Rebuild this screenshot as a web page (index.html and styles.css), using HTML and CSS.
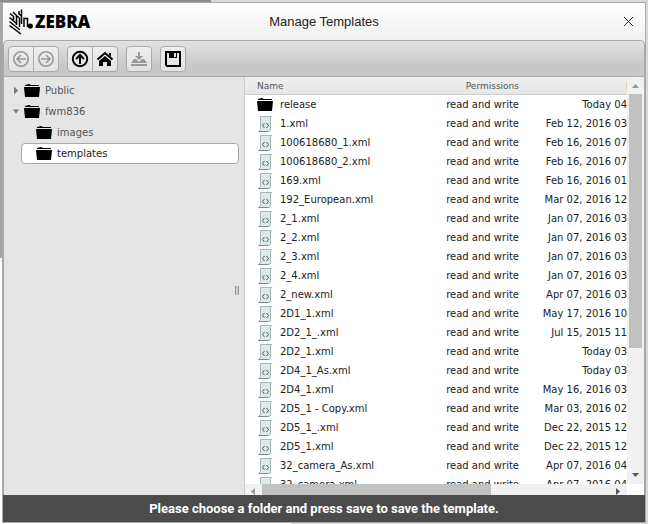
FILE: index.html
```html
<!DOCTYPE html>
<html lang="en">
<head>
<meta charset="utf-8">
<title>Manage Templates</title>
<link rel="stylesheet" href="styles.css">
</head>
<body>
<svg class="sprites" aria-hidden="true">
  <symbol id="folder" viewBox="0 0 16 13"><path d="M1 2 L1 1 L5 0 L7 1 L15 1 V2 Z M0 3 H16 L15 13 H1 Z"/></symbol>
  <symbol id="file" viewBox="0 0 15 16">
    <path d="M2.5 .5 H13.5 L12.5 2 V13.5 Q12.5 15.5 10.5 15.5 H.5 L2.5 13.5 Z" fill="#dfe9ea" stroke="#a9b6b6"/>
    <path d="M.5 15.5 H10.5" stroke="#7d8f8b" fill="none"/>
    <path d="M6.5 7 L4.5 9.5 L6.5 12 M8.5 7 L10.5 9.5 L8.5 12" fill="none" stroke="#4d5757"/>
  </symbol>
</svg>
<main class="dialog">
  <header class="title-bar">
    <div class="brand">
      <svg class="brand-mark" viewBox="0 0 24 26" fill="none" stroke="#000" stroke-width="1.5">
        <path d="M.5 16.5 L12 25 M.5 12.5 L11 21 M.5 8.5 L7 14 M1 4.5 L4.5 7.5 V11 M4 3 L7.5 6.5 V16 M10.5 9 V18 M7.5 6.5 L10.5 9"/>
        <path d="M10 2 V5 L12.5 7 M12.5 .5 V15 M15 8.5 V18 M15 9.5 H18.5 V18"/>
        <circle cx="21.3" cy="17" r="2.6" fill="#000" stroke="none"/>
      </svg>
      <span class="brand-name">ZEBRA</span>
    </div>
    <h1>Manage Templates</h1>
    <button class="close" aria-label="Close"><svg viewBox="0 0 9 9"><path d="M0 0 L9 9 M9 0 L0 9" stroke="#222" fill="none"/></svg></button>
  </header>
  <nav class="toolbar">
    <div class="group">
      <button aria-label="Back" disabled><svg viewBox="0 0 18 18"><circle cx="9" cy="9" r="7.2"/><path d="M14 9 H5 M9 5 L5 9 L9 13"/></svg></button>
      <button aria-label="Forward" disabled><svg viewBox="0 0 18 18"><circle cx="9" cy="9" r="7.2"/><path d="M4 9 H13 M9 5 L13 9 L9 13"/></svg></button>
    </div>
    <div class="group">
      <button aria-label="Up"><svg viewBox="0 0 18 18"><circle cx="9" cy="9" r="7.2"/><path d="M9 14 V5 M5 9 L9 5 L13 9"/></svg></button>
      <button aria-label="Home"><svg viewBox="0 0 18 18"><path d="M1.5 9.5 L9 3 L16.5 9.5"/><path class="solid" d="M3 11 L9 6 L15 11 V16 H11 V12 H7 V16 H3 Z M13 3 H15 V7 L13 5 Z"/></svg></button>
    </div>
    <div class="group">
      <button aria-label="Download" disabled><svg viewBox="0 0 18 18"><path class="solid" d="M8 2 H10 V6 H13 L9 10 L5 6 H8 Z M1 13 L4 9 L6 9 L9 12 L12 9 H14 L17 13 Z M1 14 H17 V16 H1 Z"/></svg></button>
    </div>
    <div class="group">
      <button aria-label="Save"><svg viewBox="0 0 18 18"><path d="M2 2 H16 V16 H3 L2 15 Z"/><path class="solid" d="M5 2 H13 V8 H5 Z"/><path class="slot" d="M10 3 H12 V7 H10 Z"/></svg></button>
    </div>
  </nav>
  <div class="content">
    <aside class="sidebar">
      <ul class="tree">
        <li><a href="#public"><span class="arrow closed"></span><svg class="folder"><use href="#folder"/></svg>Public</a></li>
        <li><a href="#fwm836"><span class="arrow open"></span><svg class="folder"><use href="#folder"/></svg>fwm836</a>
          <ul>
            <li><a href="#images"><svg class="folder"><use href="#folder"/></svg>images</a></li>
            <li><a class="selected" href="#templates"><svg class="folder"><use href="#folder"/></svg>templates</a></li>
          </ul>
        </li>
      </ul>
      <div class="grip"></div>
    </aside>
    <section class="browser">
      <div class="listing">
        <table>
          <thead><tr><th class="name">Name</th><th class="perm">Permissions</th><th class="date">M</th></tr></thead>
          <tbody id="rows"></tbody>
        </table>
      </div>
      <div class="scroll-y"><span class="tip up"></span><span class="thumb"></span><span class="tip down"></span></div>
      <div class="scroll-x"><span class="tip left"></span><span class="thumb"></span><span class="tip right"></span></div>
    </section>
  </div>
  <footer>Please choose a folder and press save to save the template.</footer>
</main>
<script src="files.js"></script>
</body>
</html>
```
FILE: files.js
```js
const files = [
  ["release", "Today 04"],
  ["1.xml", "Feb 12, 2016 03"],
  ["100618680_1.xml", "Feb 16, 2016 07"],
  ["100618680_2.xml", "Feb 16, 2016 07"],
  ["169.xml", "Feb 16, 2016 01"],
  ["192_European.xml", "Mar 02, 2016 12"],
  ["2_1.xml", "Jan 07, 2016 03"],
  ["2_2.xml", "Jan 07, 2016 03"],
  ["2_3.xml", "Jan 07, 2016 03"],
  ["2_4.xml", "Jan 07, 2016 03"],
  ["2_new.xml", "Apr 07, 2016 03"],
  ["2D1_1.xml", "May 17, 2016 10"],
  ["2D2_1_.xml", "Jul 15, 2015 11"],
  ["2D2_1.xml", "Today 03"],
  ["2D4_1_As.xml", "Today 03"],
  ["2D4_1.xml", "May 16, 2016 03"],
  ["2D5_1 - Copy.xml", "Mar 03, 2016 02"],
  ["2D5_1_.xml", "Dec 22, 2015 12"],
  ["2D5_1.xml", "Dec 22, 2015 12"],
  ["32_camera_As.xml", "Apr 07, 2016 04"],
  ["32_camera.xml", "Apr 07, 2016 04"]
];
document.getElementById("rows").innerHTML = files.map(([name, date]) => {
  const icon = name.endsWith(".xml") ? "file" : "folder";
  return `<tr><td class="name"><span class="entry"><span class="icon"><svg class="${icon}"><use href="#${icon}"/></svg></span>${name}</span></td><td class="perm">read and write</td><td class="date">${date}</td></tr>`;
}).join("");
```
FILE: styles.css
```css
* { box-sizing: border-box; }
body {
  margin: 0;
  height: 100vh;
  padding: 2px 2px 1px;
  background:
    linear-gradient(#8e8c92, #8e8c92) 0 0 / 211px 2px no-repeat,
    linear-gradient(#a5a5a5, #a5a5a5) 0 0 / 2px 258px no-repeat,
    linear-gradient(#fff, #fff) 0 258px / 2px 100% no-repeat,
    linear-gradient(#fff, #fff) 0 100% / 291px 1px no-repeat,
    #d9d9d9;
  font: 10px "DejaVu Sans", Verdana, sans-serif;
  color: #222;
}
button { border: 0; padding: 0; background: none; }
ul { list-style: none; margin: 0; padding: 0; }
a { color: inherit; text-decoration: none; }
svg { display: block; }
.sprites { position: absolute; width: 0; height: 0; }
.dialog {
  height: 100%;
  display: flex;
  flex-direction: column;
  border: 1px solid #a9a9a9;
  background: #fff;
}
.title-bar {
  flex: none;
  height: 37px;
  display: grid;
  grid-template-columns: 1fr auto 1fr;
  align-items: center;
  padding: 0 12px 0 6px;
  background: linear-gradient(#fff, #f0f0f0);
}
.brand { display: flex; align-items: center; gap: 2px; }
.brand-mark { width: 24px; height: 26px; }
.brand-name { font: bold 17px "Open Sans", sans-serif; font-weight: 800; color: #000; }
h1 { margin: 0; padding-left: 6px; font: 13px "Liberation Sans", Arial, sans-serif; }
.close { justify-self: end; }
.close svg { width: 9px; height: 9px; }
.toolbar {
  flex: none;
  height: 37px;
  display: flex;
  align-items: center;
  gap: 8px;
  padding: 0 4px;
  border: 1px solid #a9a9a9;
  border-radius: 4px 4px 0 0;
  background: linear-gradient(#e2e2e2, #c8c8c8 70%);
}
.group { display: flex; border: 1px solid #aaa; border-radius: 4px; background: linear-gradient(#eee, #e2e2e2); }
.group button { width: 24px; height: 24px; display: grid; place-items: center; }
.group button + button { width: 25px; border-left: 1px solid #aaa; }
.group svg { width: 18px; height: 18px; fill: none; stroke: #000; stroke-width: 2; }
.group .solid { fill: #000; stroke: none; }
.group .slot { fill: #e6e6e6; stroke: none; }
.group button:disabled svg { stroke: #999; stroke-width: 1.6; }
.group button:disabled .solid { fill: #999; }
.content { flex: 1; min-height: 0; display: flex; border: solid #a9a9a9; border-width: 0 1px; }
.sidebar {
  flex: 0 0 241px;
  position: relative;
  padding: 3px 5px 0 8px;
  border-right: 1px solid #ccc;
  background: #e5e5e5;
  color: #555;
}
.tree a { height: 21px; display: flex; align-items: center; gap: 5px; border: 1px solid transparent; }
.tree .folder { width: 16px; height: 13px; }
.tree ul { padding-left: 9px; }
.tree ul a { padding-left: 14px; }
.tree a.selected { background: #fff; border-color: #aaa; border-radius: 4px; color: #222; }
.arrow { width: 6px; height: 8px; background: #777; }
.closed { clip-path: polygon(17% 0, 83% 50%, 17% 100%); }
.open { clip-path: polygon(0 25%, 100% 25%, 50% 75%); }
.grip { position: absolute; right: 5px; top: 50%; width: 4px; height: 9px; border: solid #999; border-width: 0 1px; background: #ccc; }
.browser {
  flex: 1;
  min-width: 0;
  display: grid;
  grid-template: minmax(0, 1fr) 11px / minmax(0, 1fr) 17px;
}
.listing { overflow: hidden; background: linear-gradient(#f0f0f0, #e6e6e6) 0 0 / 100% 17px no-repeat; }
table { width: 100%; table-layout: fixed; border-collapse: separate; border-spacing: 0; }
th, td { padding: 0; white-space: nowrap; }
th { height: 18px; border-bottom: 1px solid #ccc; font-size: 9px; font-weight: normal; color: #555; }
td { height: 19px; }
.name { padding-left: 12px; text-align: left; }
.perm { width: 80px; text-align: right; }
.date { width: 108px; text-align: right; }
th.date { overflow: hidden; padding-left: 107px; text-align: left; }
.entry { display: flex; align-items: center; gap: 7px; }
.icon { width: 16px; }
.icon .folder { width: 16px; height: 13px; }
.icon .file { width: 15px; height: 16px; margin-left: 1px; }
.scroll-y { display: flex; flex-direction: column; align-items: center; background: #f1f1f1; }
.scroll-y .thumb { width: 13px; flex: 0 0 254px; background: #c1c1c1; }
.scroll-x { display: flex; align-items: center; background: #f1f1f1; }
.scroll-x .thumb { height: 11px; flex: 0 0 60%; background: #c1c1c1; }
.tip { flex: none; background: #555; }
.up { width: 7px; height: 4px; margin: 7px 0 6px; clip-path: polygon(50% 0, 100% 100%, 0 100%); background: #999; }
.down { width: 7px; height: 4px; margin: auto 0 7px; clip-path: polygon(0 0, 100% 0, 50% 100%); }
.left { width: 4px; height: 7px; margin: 4px 7px 0 6px; clip-path: polygon(0 50%, 100% 0, 100% 100%); background: #999; }
.right { width: 4px; height: 7px; margin: 4px 7px 0 auto; clip-path: polygon(0 0, 100% 50%, 0 100%); }
footer {
  flex: none;
  height: 27px;
  background: #4b4b4b;
  color: #fff;
  font: bold 13px/27px Roboto, Arial, sans-serif;
  text-align: center;
}
```
